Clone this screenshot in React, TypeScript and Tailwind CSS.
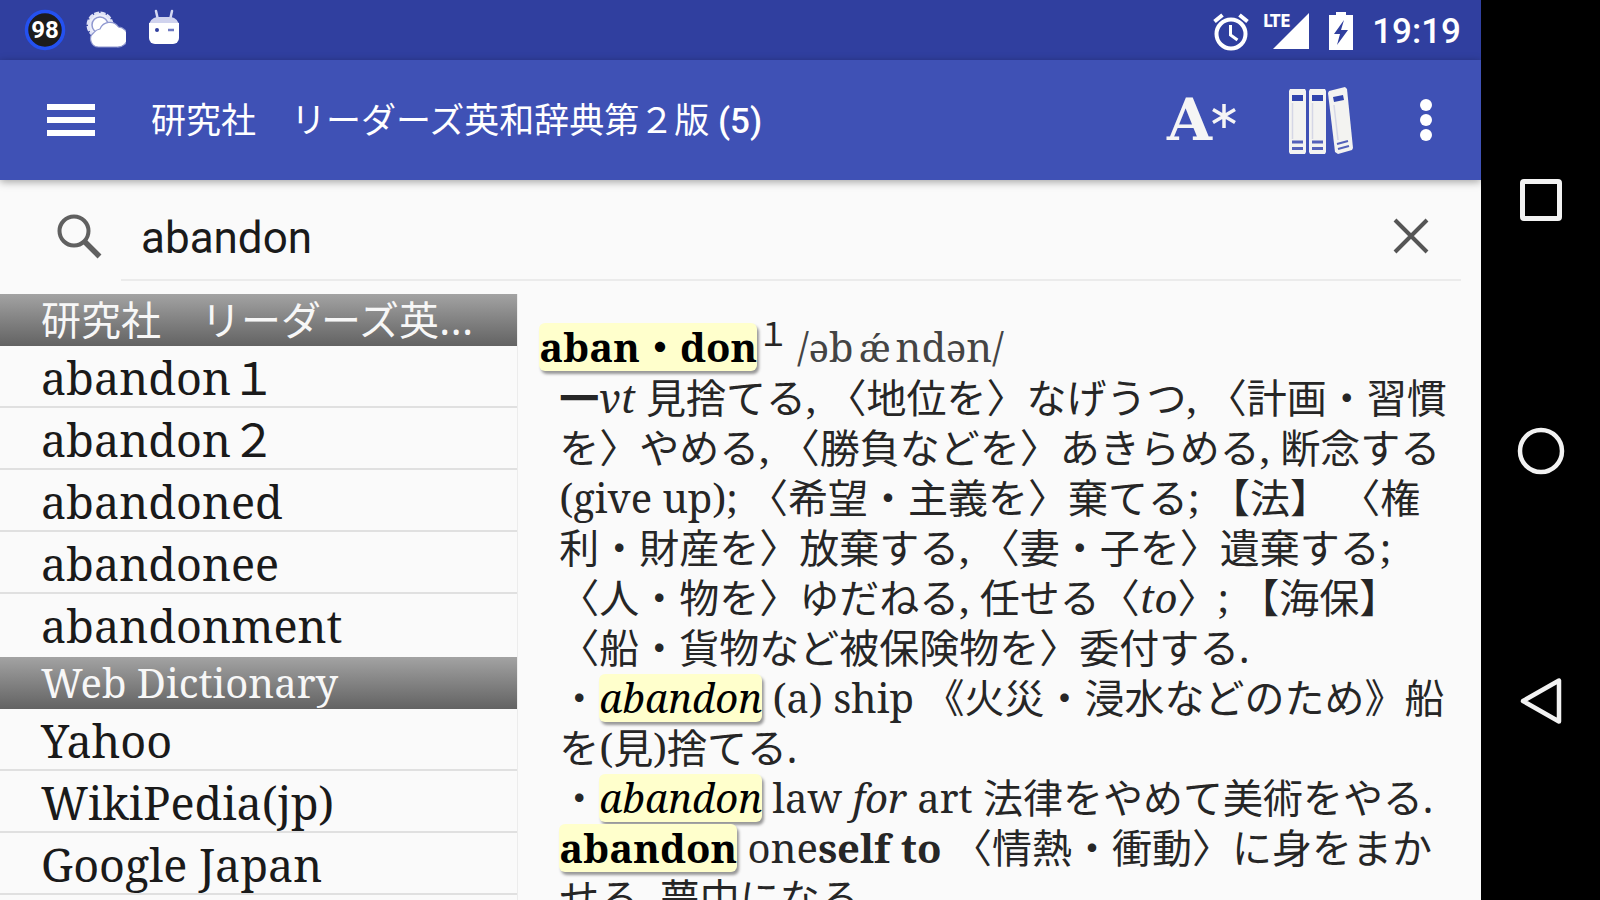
import { useState, type ReactNode } from 'react';

const groups = [
  {
    title: '研究社　リーダーズ英和辞典第２版',
    items: ['abandon１', 'abandon２', 'abandoned', 'abandonee', 'abandonment'],
  },
  {
    title: 'Web Dictionary',
    items: ['Yahoo', 'WikiPedia(jp)', 'Google Japan'],
  },
];

function Hit({ children }: { children: ReactNode }) {
  return (
    <mark className="inline-block h-12 rounded-md bg-[#ffffcc] align-baseline leading-[48px] text-black shadow-[2px_3px_3px_rgba(0,0,0,0.4)]">
      {children}
    </mark>
  );
}

function StatusBar() {
  return (
    <div className="flex h-15 shrink-0 items-center justify-between bg-[#303f9f] pr-5 pl-6 text-white">
      <div className="flex items-center gap-[18px]">
        <svg width="42" height="42" viewBox="0 0 42 42" aria-hidden="true">
          <circle cx="21" cy="21" r="18.5" fill="#1c1c1c" stroke="#2451f0" strokeWidth="3.5" />
          <text x="21" y="29" textAnchor="middle" fontSize="24" fontWeight="700" fill="#fff" fontFamily="Roboto, sans-serif">98</text>
        </svg>
        <svg width="42" height="42" viewBox="0 0 42 42" aria-hidden="true">
          <circle cx="16" cy="16" r="12" fill="#eceefa" stroke="#dfe2f6" strokeWidth="3" strokeDasharray="5 1.3" />
          <circle cx="16" cy="16" r="8" fill="#fff" stroke="#8f98d0" strokeWidth="1.5" />
          <path d="M15 38a8 8 0 0 1-5-14.500 9 9 0 0 1 6-3.500 10.500 10.500 0 0 1 18.500-2A10 10 0 0 1 33 38z" fill="#fff" stroke="#8f98d0" strokeWidth="1.200" />
        </svg>
        <svg width="42" height="42" viewBox="0 0 42 42" aria-hidden="true">
          <path d="M12 2l2 9M28 2l-2 9" stroke="#d5d9f2" strokeWidth="2.500" strokeLinecap="round" />
          <path d="M5 17a9 9 0 0 1 8-9h14a9 9 0 0 1 8 9z" fill="#d0d3ee" />
          <path d="M5 14h30v15a6 6 0 0 1-6 6H11a6 6 0 0 1-6-6z" fill="#fff" />
          <circle cx="13" cy="21" r="2" fill="#303f9f" />
          <path d="M24 21h6" stroke="#6f7ac2" strokeWidth="2.500" />
        </svg>
      </div>
      <div className="flex items-center pt-1">
        <svg width="38" height="42" viewBox="0 0 38 42" fill="none" stroke="#fff" aria-hidden="true">
          <circle cx="19" cy="23" r="14.500" strokeWidth="4" />
          <path d="M2.500 10.500l8-6.500M35.500 10.500l-8-6.500" strokeWidth="4" />
          <path d="M18.500 14v10l7 5" strokeWidth="3" />
        </svg>
        <svg className="ml-3" width="50" height="42" viewBox="0 0 50 42" aria-hidden="true">
          <path d="M47 2v36H11z" fill="#fff" />
          <text x="1" y="16" fontSize="17" fontWeight="700" fill="#fff" stroke="#303f9f" strokeWidth="3" paintOrder="stroke" fontFamily="'DejaVu Sans Condensed', 'Noto Sans', sans-serif">LTE</text>
        </svg>
        <svg className="ml-4" width="28" height="42" viewBox="0 0 28 42" aria-hidden="true">
          <path d="M8 1h10v3h7v35H1V4h7z" fill="#fff" />
          <path d="M16 9L6 23h6l-3 11 11-15h-7z" fill="#303f9f" />
        </svg>
        <time className="ml-4 text-[35px] leading-10 font-medium">19:19</time>
      </div>
    </div>
  );
}

function AppBar() {
  return (
    <header className="relative z-10 flex h-30 shrink-0 items-center bg-[#3f51b5] pr-[38px] pl-[47px] text-white shadow-[0_2px_8px_rgba(0,0,0,0.35)]">
      <button type="button" aria-label="Menu" className="shrink-0">
        <svg width="48" height="34" viewBox="0 0 48 34" fill="#fff">
          <path d="M0 1h48v6H0zM0 14h48v6H0zM0 27h48v6H0z" />
        </svg>
      </button>
      <h1 className="ml-14 flex-1 truncate pt-1 text-[35px] leading-12 font-normal">
        研究社　リーダーズ英和辞典第２版 <span className="font-medium">(5)</span>
      </h1>
      <button type="button" aria-label="Text size" className="flex items-center text-[#f5f5f5]">
        <span className="font-['DejaVu_Serif'] text-[58px] leading-15 font-bold">A</span>
        <svg width="24" height="24" viewBox="0 0 24 24" className="mb-2" stroke="#f5f5f5" strokeWidth="3.5">
          <path d="M12 0v24M1 5.500l22 13M23 5.500l-22 13" />
        </svg>
      </button>
      <button type="button" aria-label="Dictionaries" className="ml-13">
        <svg width="66" height="68" viewBox="0 0 66 68">
          <g fill="#f3f3f1">
            <path d="M2 3h15l1 2v61l-1 2H2l-1-2V5z" />
            <path d="M22 3h15l1 2v61l-1 2H22l-1-2V5z" />
            <path d="M41 5L57 1l2 2 6 59-1 2-14 4-3-2-7-59z" />
          </g>
          <g fill="#3145ad">
            <path d="M4 9h11v6H4zM24 9h11v6H24zM45 11l10-2 1 5-10 2z" />
          </g>
          <g stroke="#5361ba" strokeWidth="3">
            <path d="M4 56h11M4 62.500h11M24 56h11M24 62.500h11" />
            <path d="M49 58l11-3M50 63l11-3" strokeWidth="2" />
          </g>
          <path d="M4.500 17v36M24.500 17v36M46 19l4 35" stroke="#d5d7e6" strokeWidth="1.500" />
        </svg>
      </button>
      <button type="button" aria-label="More options" className="ml-[55px]">
        <svg width="34" height="44" viewBox="0 0 34 44" fill="#fff">
          <circle cx="17" cy="7" r="6" />
          <circle cx="17" cy="22" r="6" />
          <circle cx="17" cy="37" r="6" />
        </svg>
      </button>
    </header>
  );
}

function SearchBar() {
  const [query, setQuery] = useState('abandon');
  return (
    <form role="search" className="flex h-[101px] shrink-0 pr-5 pl-[57px]">
      <label htmlFor="query" className="flex items-center pt-3" aria-label="Search">
        <svg width="46" height="46" viewBox="0 0 46 46" fill="none" stroke="#606060">
          <circle cx="17" cy="17" r="14.500" strokeWidth="4" />
          <path d="M27.500 27.500L42.500 42.500" strokeWidth="5.500" />
        </svg>
      </label>
      <div className="ml-[18px] flex flex-1 items-center border-b-2 border-[#ebebeb] pt-3 pl-5">
        <input
          id="query"
          value={query}
          onChange={(e) => setQuery(e.target.value)}
          className="min-w-0 flex-1 bg-transparent pt-1 text-[44px] leading-13 text-[#1a1a1a] outline-none"
        />
        <button type="button" aria-label="Clear" onClick={() => setQuery('')} className="mr-8">
          <svg width="36" height="36" viewBox="0 0 36 36" stroke="#555" strokeWidth="4">
            <path d="M2 2l32 32M34 2L2 34" />
          </svg>
        </button>
      </div>
    </form>
  );
}

function WordList() {
  return (
    <nav className="w-[35%] shrink-0 overflow-hidden border-r border-[#ececec] text-[#1a1a1a]">
      {groups.map((g) => (
        <section key={g.title} className="pb-px not-last:[&_li:last-child]:border-transparent">
          <h2 className="h-13 truncate bg-linear-to-b from-[#a3a3a3] to-[#636363] pr-10 pl-[41px] text-[40px] leading-13 text-[#f7f7f7]">
            {g.title}
          </h2>
          <ul>
            {g.items.map((w) => (
              <li key={w} className="h-[62px] border-b-2 border-[#e0e0e0]">
                <button type="button" className="block w-full truncate pt-[2px] pl-[41px] text-left text-[45px] leading-15">
                  {w}
                </button>
              </li>
            ))}
          </ul>
        </section>
      ))}
    </nav>
  );
}

function Entry() {
  return (
    <article className="min-w-0 flex-1 overflow-hidden pt-7 pr-[29px] pl-[21px] text-[40px] leading-[50px] text-[#262626]">
      <h2 className="h-[51px] whitespace-nowrap">
        <Hit><b>aban・don</b></Hit>
        <sup className="relative -top-4 align-baseline text-[32px] leading-none">１</sup>
        <span className="ml-2 text-[#444]">
          /<span className="text-[38px]">ə</span>b<span className="mx-[5px] text-[38px]">ǽ</span>nd<span className="text-[38px]">ə</span>n/
        </span>
      </h2>
      <div className="pl-5">
        <p>
          <b>一</b><i>vt</i> 見捨てる, 〈地位を〉なげうつ, 〈計画・習慣を〉やめる, 〈勝負などを〉あきらめる, 断念する (give up); 〈希望・主義を〉棄てる; 【法】 〈権利・財産を〉放棄する, 〈妻・子を〉遺棄する; 〈人・物を〉ゆだねる, 任せる〈<i>to</i>〉; 【海保】 〈船・貨物など被保険物を〉委付する.
        </p>
        <p>・<Hit><i>abandon</i></Hit> (a) ship 《火災・浸水などのため》船を(見)捨てる.</p>
        <p>・<Hit><i>abandon</i></Hit> law <i>for</i> art 法律をやめて美術をやる.</p>
        <p><Hit><b>abandon</b></Hit> one<b>self to</b> 〈情熱・衝動〉に身をまかせる, 夢中になる.</p>
      </div>
    </article>
  );
}

function SystemNav() {
  return (
    <nav aria-label="System" className="flex w-[119px] shrink-0 flex-col items-center justify-between bg-black pt-[175px] pb-[174px]">
      <button type="button" aria-label="Recent apps">
        <svg width="50" height="50" viewBox="0 0 50 50" fill="none" stroke="#f2f2f2" strokeWidth="5">
          <rect x="6.500" y="6.500" width="37" height="37" rx="1.500" />
        </svg>
      </button>
      <button type="button" aria-label="Home">
        <svg width="50" height="50" viewBox="0 0 50 50" fill="none" stroke="#f2f2f2" strokeWidth="4.500">
          <circle cx="25" cy="25" r="21" />
        </svg>
      </button>
      <button type="button" aria-label="Back">
        <svg width="50" height="50" viewBox="0 0 50 50" fill="none" stroke="#f2f2f2" strokeWidth="4.500" strokeLinejoin="round">
          <path d="M43 4.500v41L7 25z" />
        </svg>
      </button>
    </nav>
  );
}

export default function App() {
  return (
    <div lang="ja" className="flex h-screen overflow-hidden bg-[#fafafa] font-[Roboto,'Noto_Sans_CJK_JP',sans-serif]">
      <div className="flex min-w-0 flex-1 flex-col">
        <StatusBar />
        <AppBar />
        <SearchBar />
        <main className="flex min-h-0 flex-1 pt-[13px] font-['Noto_Serif','DejaVu_Serif_Condensed','DejaVu_Serif','Noto_Sans_CJK_JP',serif]">
          <WordList />
          <Entry />
        </main>
      </div>
      <SystemNav />
    </div>
  );
}
